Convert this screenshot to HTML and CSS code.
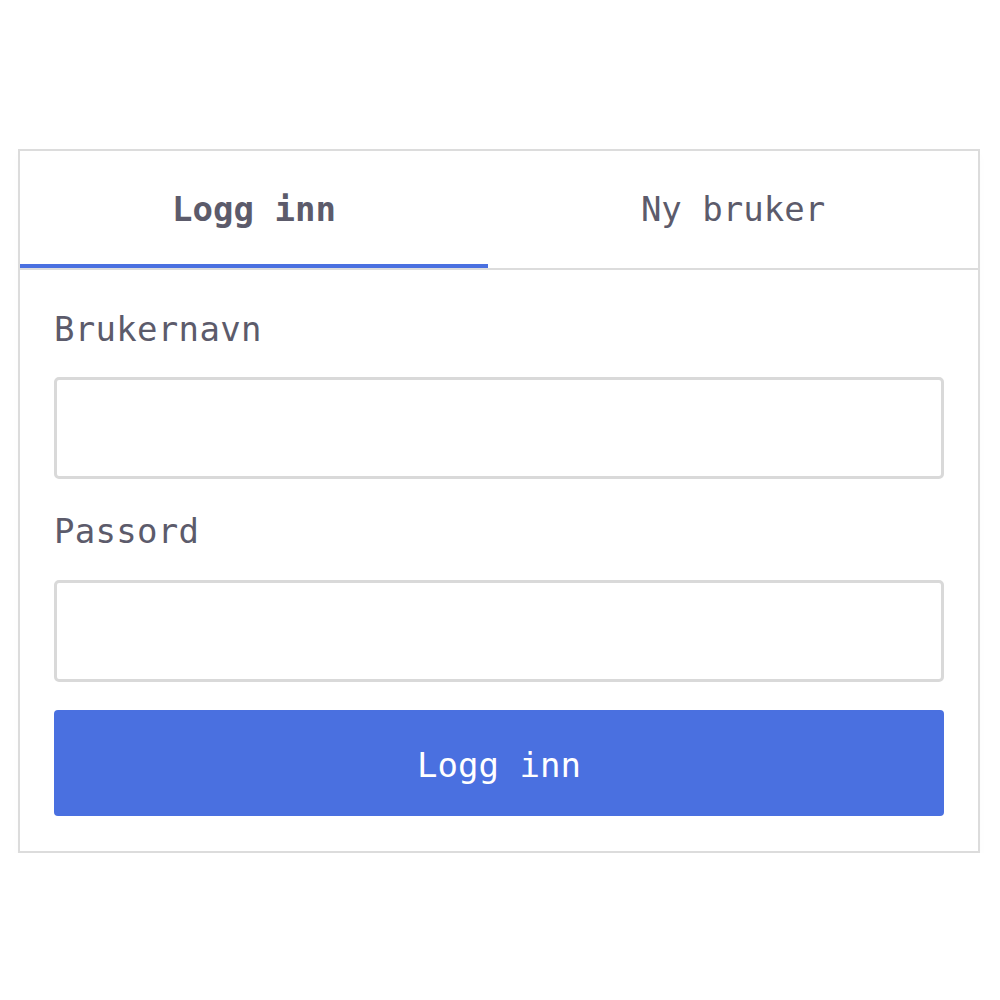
FILE: index.html
```html
<!DOCTYPE html>
<html lang="no">
<head>
<meta charset="utf-8">
<title>Logg inn</title>
<link rel="stylesheet" href="styles.css">
</head>
<body>
<div class="card">
  <div class="tabs">
    <div class="tab active">Logg inn</div>
    <div class="tab">Ny bruker</div>
  </div>
  <form class="form">
    <label class="label" for="u">Brukernavn</label>
    <input class="input" id="u" type="text">
    <label class="label label-second" for="p">Passord</label>
    <input class="input input-second" id="p" type="password">
    <button class="btn" type="button">Logg inn</button>
  </form>
</div>
</body>
</html>
```
FILE: styles.css
```css
html, body {
  margin: 0;
  padding: 0;
  background: #ffffff;
}
body {
  padding: 149px 0 0 18px;
  font-family: "DejaVu Sans Mono", "Liberation Mono", monospace;
  color: #5c5b6b;
}
.card {
  box-sizing: border-box;
  width: 962px;
  border: 2px solid #dcdcdc;
  background: #fff;
  box-shadow: 0 6px 10px rgba(0,0,0,0.02);
}
.tabs {
  display: grid;
  grid-template-columns: 468px 1fr;
  border-bottom: 2px solid #dcdcdc;
}
.tab {
  position: relative;
  height: 117px;
  display: flex;
  align-items: center;
  justify-content: center;
  font-size: 34px;
  padding-bottom: 1px;
  box-sizing: border-box;
}
.tab.active {
  font-weight: bold;
}
.tab.active::after {
  content: "";
  position: absolute;
  left: 0;
  right: 0;
  bottom: 0;
  height: 4px;
  background: #4a70e0;
}
.form {
  display: flex;
  flex-direction: column;
  padding: 34px 34px 35px 34px;
  margin: 0;
}
.label {
  font-size: 34px;
  line-height: 51px;
  letter-spacing: 0.3px;
}
.label-second {
  margin-top: 27px;
}
.input {
  box-sizing: border-box;
  margin: 22px 0 0 0;
  height: 102px;
  width: 100%;
  border: 3px solid #d9d9d9;
  border-radius: 5px;
  background: #fff;
  font: inherit;
  font-size: 30px;
  padding: 0 16px;
  outline: none;
}
.input-second {
  margin-top: 23px;
}
.btn {
  margin-top: 28px;
  height: 106px;
  width: 100%;
  border: 0;
  border-radius: 4px;
  background: #4a70e0;
  color: #fff;
  font-family: inherit;
  font-size: 34px;
  padding: 4px 0 0 0;
}
```
